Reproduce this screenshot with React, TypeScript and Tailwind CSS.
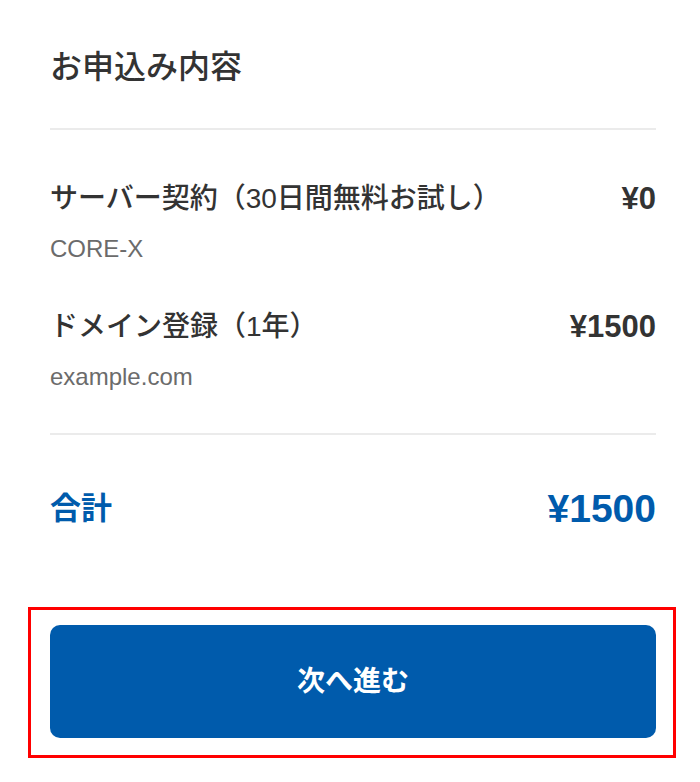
import React from 'react'

const items = [
  { name: 'サーバー契約（30日間無料お試し）', sub: 'CORE-X', price: '¥0' },
  { name: 'ドメイン登録（1年）', sub: 'example.com', price: '¥1500' },
]

export default function App() {
  return (
    <div
      className="w-[700px] h-[782px] bg-white text-[#333]"
      style={{ fontFamily: '"Liberation Sans", "Noto Sans CJK JP", sans-serif' }}
    >
      <div className="pl-[50px] pr-[44px]">
        {/* Heading */}
        <h1 className="pt-[44px] pb-[38px] text-[32px] leading-[46px] font-medium">お申込み内容</h1>
        <div className="h-[2px] bg-[#ebebeb]" />

        {/* Line items */}
        <div className="pt-[49px] pb-[41px] flex flex-col gap-[43px]">
          {items.map((item) => (
            <div key={item.sub}>
              <div className="flex items-center justify-between leading-[40px]">
                <span className="text-[28px] font-medium">{item.name}</span>
                <span className="text-[31px] font-bold">{item.price}</span>
              </div>
              <p className="mt-[15px] text-[24px] leading-[30px] text-[#6b6b6b]">{item.sub}</p>
            </div>
          ))}
        </div>
        <div className="h-[2px] bg-[#ebebeb]" />

        {/* Total */}
        <div className="mt-[49px] flex items-center justify-between leading-[50px] text-[#005bac] font-bold">
          <span className="text-[31px]">合計</span>
          <span className="text-[39px]">¥1500</span>
        </div>
      </div>

      {/* Highlighted action */}
      <div className="mt-[73px] ml-[28px] mr-[24px] border-[3px] border-[#ff0000] pt-[15px] pb-[17px] pl-[19px] pr-[17px]">
        <button className="w-full h-[113px] rounded-[10px] bg-[#005bac] text-white text-[28px] font-bold">
          次へ進む
        </button>
      </div>
    </div>
  )
}
